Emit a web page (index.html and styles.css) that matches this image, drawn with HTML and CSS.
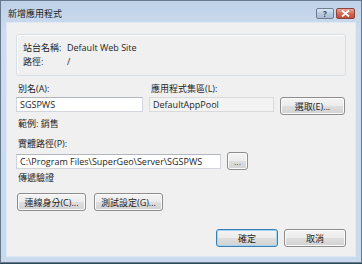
FILE: index.html
```html
<!DOCTYPE html>
<html lang="zh-Hant">
<head>
  <meta charset="UTF-8">
  <title>新增應用程式</title>
  <link rel="stylesheet" href="styles.css">
</head>
<body>
  <div class="window">
    <div class="titlebar">
      <span class="title">新增應用程式</span>
      <div class="caption-buttons">
        <span class="cap-btn help">?</span>
        <span class="cap-btn close">
          <svg width="9" height="7" viewBox="0 0 9 7"><path d="M1 0.5 L8 6.5 M8 0.5 L1 6.5" stroke="#fff" stroke-width="1.8"/></svg>
        </span>
      </div>
    </div>

    <div class="client">
      <div class="groupbox">
        <div class="info-row"><span class="info-label">站台名稱:</span><span>Default Web Site</span></div>
        <div class="info-row"><span class="info-label">路徑:</span><span>/</span></div>
      </div>

      <div class="fields">
        <label class="lbl">別名(A):</label>
        <label class="lbl">應用程式集區(L):</label>
        <span></span>
        <div class="textbox">SGSPWS</div>
        <div class="textbox readonly">DefaultAppPool</div>
        <button class="btn">選取(E)...</button>
      </div>

      <div class="hint">範例: 銷售</div>

      <label class="lbl path-label">實體路徑(P):</label>
      <div class="path-row">
        <div class="textbox path">C:\Program Files\SuperGeo\Server\SGSPWS</div>
        <button class="btn browse">...</button>
      </div>

      <div class="section">傳遞驗證</div>
      <div class="auth-row">
        <button class="btn wide">連線身分(C)...</button>
        <button class="btn wide">測試設定(G)...</button>
      </div>

      <div class="footer">
        <button class="btn default">確定</button>
        <button class="btn">取消</button>
      </div>
    </div>
  </div>
</body>
</html>
```

FILE: styles.css
```css
body {
  margin: 0;
  padding: 0;
  background-color: #2b4a57;
  font-family: 'Open Sans', 'Noto Sans CJK TC', sans-serif;
  font-size: 9px;
  color: #1e1e1e;
}
.window {
  width: 362px;
  height: 263px;
  box-sizing: border-box;
  border: 1px solid #67798c;
  background: linear-gradient(#bfd2e9, #cddcee 30px, #c9daed);
  display: flex;
  flex-direction: column;
  padding: 0 5px 5px 5px;
}
.titlebar {
  height: 21px;
  display: flex;
  align-items: center;
  justify-content: space-between;
  flex-shrink: 0;
}
.title {
  padding-left: 2px;
  font-size: 9px;
  color: #222;
  margin-top: 4px;
}
.caption-buttons {
  display: flex;
  gap: 2px;
  margin-top: 4px;
  margin-right: 1px;
}
.cap-btn {
  height: 9px;
  border: 1px solid #6d7e92;
  border-radius: 2px;
  display: flex;
  align-items: center;
  justify-content: center;
  font-size: 8px;
  font-weight: bold;
  line-height: 1;
}
.help {
  width: 16px;
  background: linear-gradient(#dfe8f3, #b9cadf 50%, #a9bdd6);
  color: #3b4a5c;
}
.close {
  width: 17px;
  background: linear-gradient(#e9a99b, #d2695a 50%, #c24a3a);
  border-color: #8a4538;
}
.client {
  flex: 1;
  background: #f0f0f0;
  border: 1px solid #dfe9f5;
  padding: 0 9px 0 9px;
  display: flex;
  flex-direction: column;
}
.groupbox {
  margin-top: 11px;
  height: 42px;
  box-sizing: border-box;
  border: 1px solid #d5dfe5;
  border-radius: 3px;
  box-shadow: inset 1px 1px 0 #fff;
  padding: 6px 6px 0;
}
.info-row {
  display: flex;
  height: 14px;
  line-height: 14px;
}
.info-label {
  width: 44px;
}
.fields {
  margin-top: 6px;
  display: grid;
  grid-template-columns: 127px 125px 65px;
  column-gap: 6px;
  row-gap: 1px;
  align-items: start;
}
.lbl {
  display: block;
  line-height: 14px;
  padding-left: 2px;
}
.textbox {
  height: 15px;
  box-sizing: border-box;
  border: 1px solid #d2d6dc;
  border-top-color: #b1b5bc;
  background: #fff;
  padding-left: 3px;
  line-height: 13px;
  white-space: nowrap;
  overflow: hidden;
}
.textbox.readonly {
  background: #f3f3f3;
  border-color: #dadada;
}
.btn {
  height: 18px;
  margin: 0;
  padding: 0;
  border: 1px solid #8d8d8d;
  border-radius: 3px;
  background: linear-gradient(#f4f4f4, #ececec 48%, #dedede 52%, #d2d2d2);
  box-shadow: inset 0 0 0 1px #fbfbfb;
  font-family: 'Open Sans', 'Noto Sans CJK TC', sans-serif;
  font-size: 9px;
  color: #1e1e1e;
}
.hint {
  margin-top: 2px;
  line-height: 14px;
  padding-left: 2px;
}
.path-label {
  margin-top: 6px;
}
.path-row {
  display: flex;
  align-items: center;
  gap: 6px;
  margin-top: 1px;
}
.textbox.path {
  width: 205px;
  height: 15px;
}
.browse {
  width: 21px;
  height: 18px;
  color: #555;
}
.section {
  margin-top: 1px;
  line-height: 14px;
  padding-left: 2px;
}
.auth-row {
  display: flex;
  gap: 8px;
  margin-top: 8px;
  padding-left: 1px;
}
.wide {
  width: 69px;
}
.footer {
  margin-top: auto;
  margin-bottom: 9px;
  display: flex;
  justify-content: flex-end;
  gap: 6px;
}
.footer .btn {
  width: 62px;
}
.btn.default {
  border-color: #3c7fb1;
  box-shadow: inset 0 0 0 1px #9fd5f5;
}
```
